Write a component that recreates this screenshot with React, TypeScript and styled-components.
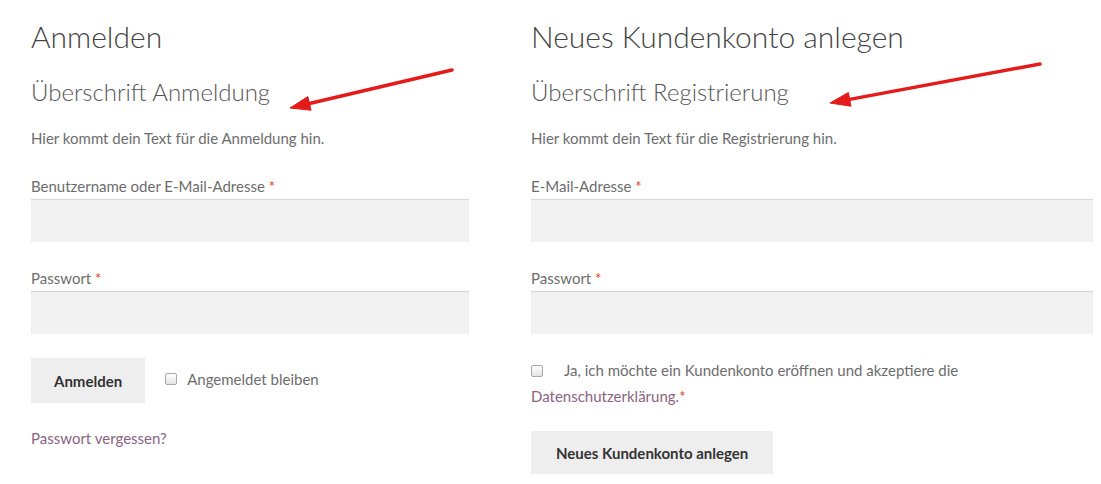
import React from 'react';
import styled, { createGlobalStyle } from 'styled-components';

const GlobalStyle = createGlobalStyle`
  body {
    margin: 0;
    background: #ffffff;
    font-family: Lato, "Open Sans", sans-serif;
    color: #6d6d6d;
  }
`;

const Page = styled.div`
  display: flex;
  gap: 62px;
  padding: 16px 0 0 31px;
`;

const Column = styled.div<{ $width: number }>`
  position: relative;
  width: ${(p) => p.$width}px;
  display: flex;
  flex-direction: column;
`;

const Title = styled.h2`
  margin: 0;
  font-size: 30px;
  font-weight: 300;
  line-height: 40px;
  color: #444444;
`;

const SubTitle = styled.h3`
  margin: 20px 0 0;
  font-size: 24px;
  font-weight: 300;
  line-height: 32px;
  color: #555555;
`;

const Intro = styled.p`
  margin: 20px 0 0;
  font-size: 15px;
  line-height: 20px;
`;

const Label = styled.label<{ $first?: boolean }>`
  display: block;
  margin-top: ${(p) => (p.$first ? 28 : 26)}px;
  font-size: 15px;
  line-height: 20px;
`;

const Required = styled.span`
  color: #e2401c;
`;

const Input = styled.input`
  display: block;
  box-sizing: border-box;
  width: 100%;
  height: 43px;
  margin-top: 3px;
  border: 0;
  background: #f2f2f2;
  box-shadow: inset 0 1px 1px rgba(0, 0, 0, 0.125);
  outline: none;
`;

const Button = styled.button`
  box-sizing: border-box;
  height: 45px;
  padding: 0 23px;
  border: 0;
  background: #eeeeee;
  color: #333333;
  font-family: Lato, "Open Sans", sans-serif;
  font-size: 15px;
  font-weight: 700;
`;

const ActionRow = styled.div`
  display: flex;
  align-items: center;
  gap: 20px;
  margin-top: 24px;
`;

const Check = styled.input.attrs({ type: 'checkbox' })`
  appearance: none;
  width: 12px;
  height: 12px;
  margin: 0;
  border: 1px solid #a9a9a9;
  border-radius: 2px;
  background: linear-gradient(#ffffff, #e4e4e4);
  vertical-align: -1px;
`;

const CheckLabel = styled.label`
  display: flex;
  align-items: center;
  gap: 10px;
  font-size: 15px;
  margin-top: -4px;
`;

const Link = styled.a`
  color: #8a6381;
  text-decoration: none;
`;

const ForgotLine = styled.p`
  margin: 25px 0 0;
  font-size: 15px;
  line-height: 20px;
`;

const Consent = styled.p`
  margin: 23px 0 0;
  max-width: 500px;
  font-size: 15px;
  line-height: 26px;

  ${Check} {
    margin-right: 21px;
  }
`;

const RegisterButton = styled(Button)`
  align-self: flex-start;
  margin-top: 22px;
  height: 43px;
  padding: 0 25px;
`;

const Annotation = styled.svg`
  position: absolute;
  left: 0;
  top: -16px;
  width: 100%;
  height: 140px;
  pointer-events: none;
`;

type ArrowProps = { x1: number; y1: number; x2: number; y2: number };

function Arrow({ x1, y1, x2, y2 }: ArrowProps) {
  const dx = x2 - x1;
  const dy = y2 - y1;
  const len = Math.hypot(dx, dy);
  const ux = dx / len;
  const uy = dy / len;
  const bx = x2 - ux * 20;
  const by = y2 - uy * 20;
  const px = -uy * 7;
  const py = ux * 7;
  return (
    <g fill="#e31b1b" stroke="#e31b1b">
      <line x1={x1} y1={y1} x2={bx} y2={by} strokeWidth={3.5} strokeLinecap="round" />
      <polygon
        points={`${x2},${y2} ${bx + px},${by + py} ${bx - px},${by - py}`}
        strokeWidth={1}
        strokeLinejoin="round"
      />
    </g>
  );
}

export default function App() {
  return (
    <>
      <GlobalStyle />
      <Page>
        <Column $width={438}>
          <Annotation>
            <Arrow x1={421} y1={70} x2={259} y2={108} />
          </Annotation>
          <Title>Anmelden</Title>
          <SubTitle>Überschrift Anmeldung</SubTitle>
          <Intro>Hier kommt dein Text für die Anmeldung hin.</Intro>
          <Label $first>
            Benutzername oder E-Mail-Adresse <Required>*</Required>
          </Label>
          <Input type="text" />
          <Label>
            Passwort <Required>*</Required>
          </Label>
          <Input type="password" />
          <ActionRow>
            <Button>Anmelden</Button>
            <CheckLabel>
              <Check />
              Angemeldet bleiben
            </CheckLabel>
          </ActionRow>
          <ForgotLine>
            <Link href="#">Passwort vergessen?</Link>
          </ForgotLine>
        </Column>
        <Column $width={562}>
          <Annotation>
            <Arrow x1={509} y1={64} x2={299} y2={103} />
          </Annotation>
          <Title>Neues Kundenkonto anlegen</Title>
          <SubTitle>Überschrift Registrierung</SubTitle>
          <Intro>Hier kommt dein Text für die Registrierung hin.</Intro>
          <Label $first>
            E-Mail-Adresse <Required>*</Required>
          </Label>
          <Input type="email" />
          <Label>
            Passwort <Required>*</Required>
          </Label>
          <Input type="password" />
          <Consent>
            <Check />
            Ja, ich möchte ein Kundenkonto eröffnen und akzeptiere die{' '}
            <Link href="#">Datenschutzerklärung.</Link>
            <Required>*</Required>
          </Consent>
          <RegisterButton>Neues Kundenkonto anlegen</RegisterButton>
        </Column>
      </Page>
    </>
  );
}
